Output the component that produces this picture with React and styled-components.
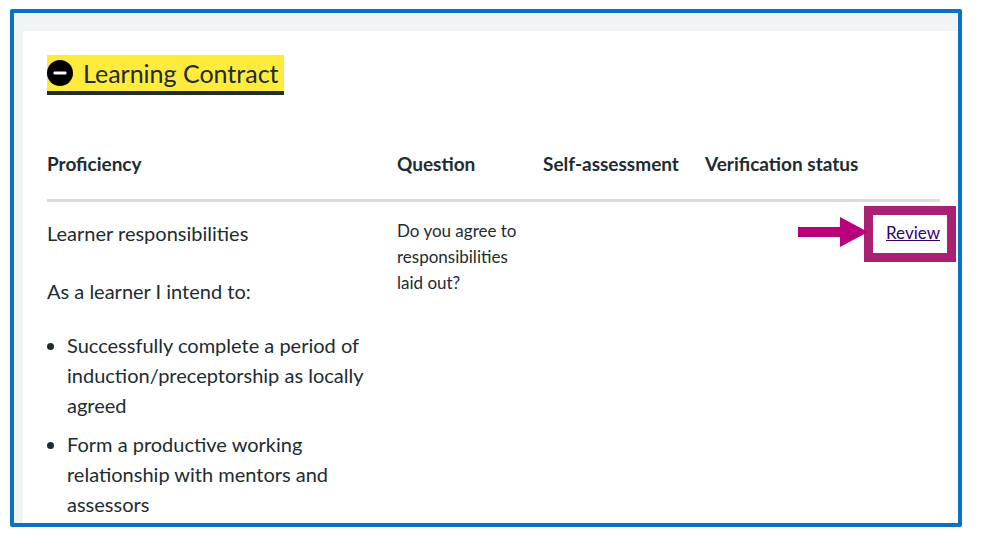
import React from "react";
import styled, { createGlobalStyle } from "styled-components";

const GlobalStyle = createGlobalStyle`
  *, *::before, *::after {
    box-sizing: border-box;
  }
  body {
    margin: 0;
    background: #fff;
    font-family: "Lato", "Liberation Sans", sans-serif;
    color: #212b32;
  }
`;

const Frame = styled.div`
  position: relative;
  margin: 9px 0 0 10px;
  width: 952px;
  height: 518px;
  border: 4px solid #0a72c3;
  border-radius: 2px;
  background: #f0f4f5;
  padding: 18px 0 0 9px;
  overflow: hidden;
`;

const Panel = styled.div`
  background: #fff;
  height: 100%;
  padding: 24px 16px 0 24px;
`;

const Heading = styled.h2`
  display: inline-flex;
  align-items: center;
  gap: 10px;
  margin: 0;
  padding: 0 5px 0 0;
  height: 36px;
  background: #ffeb3b;
  box-shadow: 0 4px 0 #212b32;
  font-size: 25px;
  font-weight: 400;
  color: #212b32;
`;

const MinusIcon = () => (
  <svg width="26" height="26" viewBox="0 0 26 26">
    <circle cx="13" cy="13" r="13" fill="#000" />
    <rect x="6.5" y="11.5" width="13" height="3" rx="1" fill="#fff" />
  </svg>
);

const Table = styled.div`
  margin-top: 61px;
  display: grid;
  grid-template-columns: 350px 146px 162px 235px;
`;

const HeadCell = styled.div`
  font-size: 19px;
  font-weight: 700;
  line-height: 24px;
  padding-bottom: 23px;
  border-bottom: 3px solid #d8dde0;
`;

const Cell = styled.div`
  padding: 16px ${(p) => (p.right ? "0" : "16px")} 0 0;
  text-align: ${(p) => (p.right ? "right" : "left")};
`;

const Para = styled.p`
  margin: 0 0 28px;
  font-size: 20px;
  line-height: 30px;
`;

const Bullets = styled.ul`
  margin: -4px 0 0;
  padding-left: 20px;
  font-size: 20px;
  line-height: 30px;

  li {
    margin-bottom: 9px;
  }
`;

const Question = styled.div`
  font-size: 17px;
  line-height: 26px;
`;

const ReviewLink = styled.a`
  display: inline-block;
  margin-top: 4px;
  font-size: 17px;
  color: #330072;
  text-decoration: underline;
`;

const HighlightBox = styled.div`
  position: absolute;
  left: 850px;
  top: 193px;
  width: 92px;
  height: 56px;
  border: 9px solid #aa2173;
`;

const Arrow = styled.svg`
  position: absolute;
  left: 784px;
  top: 204px;
`;

export default function App() {
  return (
    <>
      <GlobalStyle />
      <Frame>
        <Panel>
          <Heading>
            <MinusIcon />
            Learning Contract
          </Heading>
          <Table>
            <HeadCell>Proficiency</HeadCell>
            <HeadCell>Question</HeadCell>
            <HeadCell>Self-assessment</HeadCell>
            <HeadCell>Verification status</HeadCell>
            <Cell>
              <Para>Learner responsibilities</Para>
              <Para>As a learner I intend to:</Para>
              <Bullets>
                <li>Successfully complete a period of induction/preceptorship as locally agreed</li>
                <li>Form a productive working relationship with mentors and assessors</li>
              </Bullets>
            </Cell>
            <Cell>
              <Question>Do you agree to responsibilities laid out?</Question>
            </Cell>
            <Cell />
            <Cell right>
              <ReviewLink href="#">Review</ReviewLink>
            </Cell>
          </Table>
        </Panel>
        <HighlightBox />
        <Arrow width="70" height="32" viewBox="0 0 70 32">
          <rect x="0" y="10" width="44" height="10" fill="#b8007a" />
          <polygon points="42,0 70,15 42,30" fill="#b8007a" />
        </Arrow>
      </Frame>
    </>
  );
}
